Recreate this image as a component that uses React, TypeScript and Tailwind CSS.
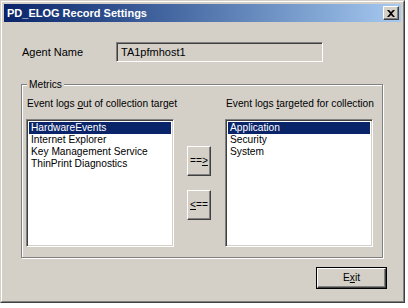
const raised =
  "border border-t-white border-l-white border-r-[#404040] border-b-[#404040] shadow-[inset_-1px_-1px_0_#808080]";
const sunken =
  "border border-t-[#808080] border-l-[#808080] border-r-white border-b-white shadow-[inset_1px_1px_0_#404040,inset_-1px_-1px_0_#d4d0c8]";

const outLogs = ["HardwareEvents", "Internet Explorer", "Key Management Service", "ThinPrint Diagnostics"];
const inLogs = ["Application", "Security", "System"];

const ListBox = ({ items }: { items: string[] }) => (
  <div className={`w-[148px] h-[128px] bg-white p-[2px] ${sunken}`}>
    {items.map((item, i) => (
      <div
        key={item}
        className={`h-[12px] leading-[12px] pl-[2px] whitespace-nowrap ${
          i === 0 ? "bg-[#0a246a] text-white" : "text-black"
        }`}
      >
        {item}
      </div>
    ))}
  </div>
);

const App = () => {
  return (
    <div
      className="w-[405px] h-[303px] bg-[#d4d0c8] border border-t-[#d4d0c8] border-l-[#d4d0c8] border-r-[#404040] border-b-[#404040] text-[10.2px] text-black"
      style={{ fontFamily: '"Liberation Sans", Arial, sans-serif' }}
    >
      <div className="w-full h-full border border-t-white border-l-white border-r-[#808080] border-b-[#808080] p-[2px] flex flex-col">
        {/* title bar */}
        <div className="h-[18px] flex items-center justify-between pl-[3px] pr-[2px] bg-gradient-to-r from-[#0a246a] to-[#a6caf0]">
          <span className="text-white font-bold text-[11px]">PD_ELOG Record Settings</span>
          <div
            className={`w-[16px] h-[14px] bg-[#d4d0c8] flex items-center justify-center ${raised}`}
          >
            <svg width="8" height="7" viewBox="0 0 8 7">
              <path d="M0 0h2l2 2 2-2h2L5 3.5 8 7H6L4 5 2 7H0l3-3.5z" fill="black" />
            </svg>
          </div>
        </div>

        {/* agent name */}
        <div className="flex items-center mt-[20px] pl-[18px]">
          <span className="w-[94px] text-[11px]">Agent Name</span>
          <div className={`w-[207px] h-[20px] flex items-center pl-[4px] text-[11px] ${sunken}`}>
            TA1pfmhost1
          </div>
        </div>

        {/* metrics group */}
        <div className="relative ml-[17px] mt-[22px] w-[362px] h-[174px] border border-[#808080] shadow-[1px_1px_0_white,inset_1px_1px_0_white]">
          <span className="absolute -top-[8px] left-[5px] px-[2px] bg-[#d4d0c8]">Metrics</span>
          <div className="flex pl-[4px] pt-[11px]">
            <div className="flex flex-col w-[148px]">
              <span className="pl-[1px] h-[23px] whitespace-nowrap">
                Event logs <u>o</u>ut of collection target
              </span>
              <ListBox items={outLogs} />
            </div>
            <div className="flex flex-col gap-[14px] ml-[13px] mr-[14px] mt-[50px]">
              <div className={`w-[24px] h-[30px] flex items-center justify-center ${raised}`}>
                ==<u>&gt;</u>
              </div>
              <div className={`w-[24px] h-[30px] flex items-center justify-center ${raised}`}>
                <u>&lt;</u>==
              </div>
            </div>
            <div className="flex flex-col w-[148px]">
              <span className="pl-[1px] h-[23px] whitespace-nowrap">
                Event logs <u>t</u>argeted for collection
              </span>
              <ListBox items={inLogs} />
            </div>
          </div>
        </div>

        {/* exit */}
        <div className="flex justify-end mt-[9px] pr-[14px]">
          <div className="w-[71px] h-[22px] border border-black">
            <div className={`w-full h-full flex items-center justify-center ${raised}`}>
              E<u>x</u>it
            </div>
          </div>
        </div>
      </div>
    </div>
  );
};

export default App;
